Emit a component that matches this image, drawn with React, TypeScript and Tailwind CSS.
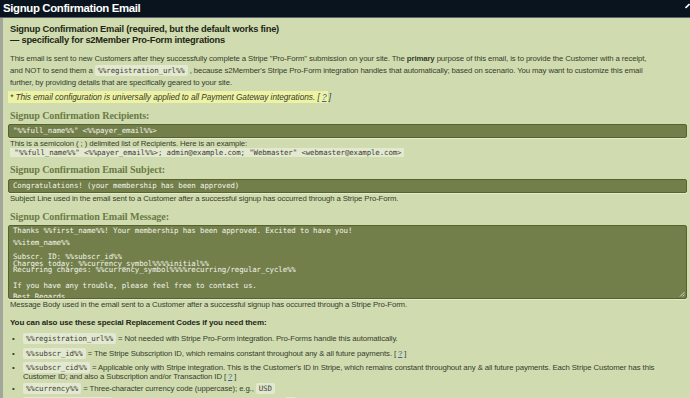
import React from 'react';

const sans = "font-['Liberation_Sans',Arial,sans-serif]";
const serif = "font-['Liberation_Serif','Times_New_Roman',serif]";
const mono = "font-['DejaVu_Sans_Mono',monospace]";

const Code: React.FC<{ children: React.ReactNode }> = ({ children }) => (
  <code className={`${mono} text-[7.4px] tracking-[-0.1px] bg-[#e3e8d0] text-[#3c4230] px-[3px] py-[1px] rounded-[2px]`}>
    {children}
  </code>
);

const Help: React.FC = () => (
  <span>
    [ <a className="text-[#2f64a8] underline">?</a> ]
  </span>
);

const FieldLabel: React.FC<{ children: React.ReactNode; className?: string }> = ({ children, className = '' }) => (
  <div className={`${serif} ${className} font-bold text-[10.1px] tracking-[-0.1px] leading-[12px] text-[#6a7a45] pl-[2px]`}>
    {children}
  </div>
);

const InputBox: React.FC<{ value: string; className?: string }> = ({ value, className = '' }) => (
  <div
    className={`${mono} ${className} h-[14px] bg-[#727f4b] border border-[#56632f] rounded-[2px] shadow-[0_1px_0_#e4ebcc] text-[7.4px] tracking-[-0.1px] leading-[12px] text-[#f3f3e8] pl-[4px] whitespace-pre`}
  >
    {value}
  </div>
);

const messageLines: { text: string; mt: string }[] = [
  { text: 'Thanks %%first_name%%! Your membership has been approved. Excited to have you!', mt: 'mt-[2px]' },
  { text: '%%item_name%%', mt: 'mt-[5.5px]' },
  { text: 'Subscr. ID: %%subscr_id%%', mt: 'mt-[7.5px]' },
  { text: 'Charges today: %%currency_symbol%%%%initial%%', mt: 'mt-0' },
  { text: 'Recurring charges: %%currency_symbol%%%%recurring/regular_cycle%%', mt: 'mt-0' },
  { text: 'If you have any trouble, please feel free to contact us.', mt: 'mt-[9.5px]' },
  { text: 'Best Regards,', mt: 'mt-[4.5px]' },
];

const helpText = 'pl-[2px] text-[#363c2c] text-[7.8px] tracking-[-0.12px] leading-[9px]';

export default function App() {
  return (
    <div className={`${sans} w-[690px] h-[398px] overflow-hidden bg-[#d0dcaf] flex flex-col`}>
      <div className="relative h-[18px] shrink-0 bg-[#0a141e] border-b border-[#5d656a] flex items-center pl-[3px]">
        <span className="text-white font-bold text-[11.4px] tracking-[-0.35px]">Signup Confirmation Email</span>
        <svg className="absolute right-0 top-[3px]" width="5" height="6" viewBox="0 0 5 6">
          <path d="M0.5 5 L4.5 1" stroke="#ffffff" strokeWidth="1.6" />
        </svg>
      </div>

      <div className="flex-1 border-l-[3px] border-[#a2a79a] pl-[5px] pr-[3px]">
        <div className="pl-[2px] mt-[6px] text-[#1e2617] font-bold text-[9.3px] tracking-[-0.22px] leading-[11px]">
          Signup Confirmation Email (required, but the default works fine)
          <br />— specifically for s2Member Pro-Form integrations
        </div>

        <p className="pl-[2px] mt-[7px] text-[#363c2c] text-[7.8px] tracking-[-0.12px] leading-[12px]">
          This email is sent to new Customers after they successfully complete a Stripe "Pro-Form" submission on your site. The <b>primary</b> purpose of this email, is to provide the Customer with a receipt,
          <br />and NOT to send them a <Code>%%registration_url%%</Code> , because s2Member's Stripe Pro-Form integration handles that automatically; based on scenario. You may want to customize this email
          <br />further, by providing details that are specifically geared to your site.
        </p>

        <div className="mt-[2px] w-[320px] h-[12px] bg-[#eef3a4] pl-[2px] italic text-[#363c2c] text-[8.3px] tracking-[-0.05px] leading-[12px] whitespace-nowrap">
          * This email configuration is universally applied to all Payment Gateway integrations. <Help />
        </div>

        <FieldLabel className="mt-[7px]">Signup Confirmation Recipients:</FieldLabel>
        <InputBox className="mt-[2px]" value={'"%%full_name%%" <%%payer_email%%>'} />
        <div className={`${helpText} mt-[1px]`}>
          This is a semicolon ( ; ) delimited list of Recipients. Here is an example:
        </div>
        <div className="pl-[2px] h-[9px] flex">
          <div className={`${mono} text-[7.4px] tracking-[-0.1px] leading-[9px] bg-[#e3e8d0] text-[#3c4230] pr-[3px] whitespace-pre`}>
            {' "%%full_name%%" <%%payer_email%%>; admin@example.com; "Webmaster" <webmaster@example.com>'}
          </div>
        </div>

        <FieldLabel className="mt-[7px]">Signup Confirmation Email Subject:</FieldLabel>
        <InputBox className="mt-[3px]" value="Congratulations! (your membership has been approved)" />
        <div className={`${helpText} mt-[1px]`}>
          Subject Line used in the email sent to a Customer after a successful signup has occurred through a Stripe Pro-Form.
        </div>

        <FieldLabel className="mt-[8px]">Signup Confirmation Email Message:</FieldLabel>
        <div className="relative mt-[2px] h-[74px] overflow-hidden bg-[#727f4b] border border-[#56632f] rounded-[2px] shadow-[0_1px_0_#e4ebcc] pl-[4px]">
          {messageLines.map((line) => (
            <div
              key={line.text}
              className={`${mono} ${line.mt} text-[7.4px] tracking-[-0.1px] leading-[6.5px] h-[6.5px] text-[#f3f3e8] whitespace-pre`}
            >
              {line.text}
            </div>
          ))}
          <svg className="absolute right-[1px] bottom-[1px]" width="6" height="6" viewBox="0 0 6 6">
            <path d="M1 5.5 L5.5 1 M3.5 5.5 L5.5 3.5" stroke="#e8ecd8" strokeWidth="0.8" />
          </svg>
        </div>
        <div className={`${helpText} mt-[1px]`}>
          Message Body used in the email sent to a Customer after a successful signup has occurred through a Stripe Pro-Form.
        </div>

        <div className="pl-[2px] mt-[7.5px] text-[#1e2617] font-bold text-[8px] tracking-[-0.12px] leading-[12px]">
          You can also use these special Replacement Codes if you need them:
        </div>

        <ul className="text-[#363c2c] text-[7.8px] tracking-[-0.12px] leading-[9px]">
          <li className="mt-[5.5px] flex">
            <span className="w-[15px] pl-[4px] shrink-0">•</span>
            <span>
              <Code>%%registration_url%%</Code> = Not needed with Stripe Pro-Form integration. Pro-Forms handle this automatically.
            </span>
          </li>
          <li className="mt-[6px] flex">
            <span className="w-[15px] pl-[4px] shrink-0">•</span>
            <span>
              <Code>%%subscr_id%%</Code> = The Stripe Subscription ID, which remains constant throughout any &amp; all future payments. <Help />
            </span>
          </li>
          <li className="mt-[5px] flex">
            <span className="w-[15px] pl-[4px] shrink-0">•</span>
            <span>
              <Code>%%subscr_cid%%</Code> = Applicable only with Stripe integration. This is the Customer's ID in Stripe, which remains constant throughout any &amp; all future payments. Each Stripe Customer has this
              <br />Customer ID; and also a Subscription and/or Transaction ID <Help />
            </span>
          </li>
          <li className="mt-[3px] flex">
            <span className="w-[15px] pl-[4px] shrink-0">•</span>
            <span>
              <Code>%%currency%%</Code> = Three-character currency code (uppercase); e.g., <Code>USD</Code>
            </span>
          </li>
          <li className="mt-[5px] flex">
            <span className="w-[15px] pl-[4px] shrink-0">•</span>
            <span>
              <Code>%%currency_symbol%%</Code> = Currency symbol (based on currency code); e.g., <Code>$</Code>
            </span>
          </li>
        </ul>
      </div>
    </div>
  );
}
